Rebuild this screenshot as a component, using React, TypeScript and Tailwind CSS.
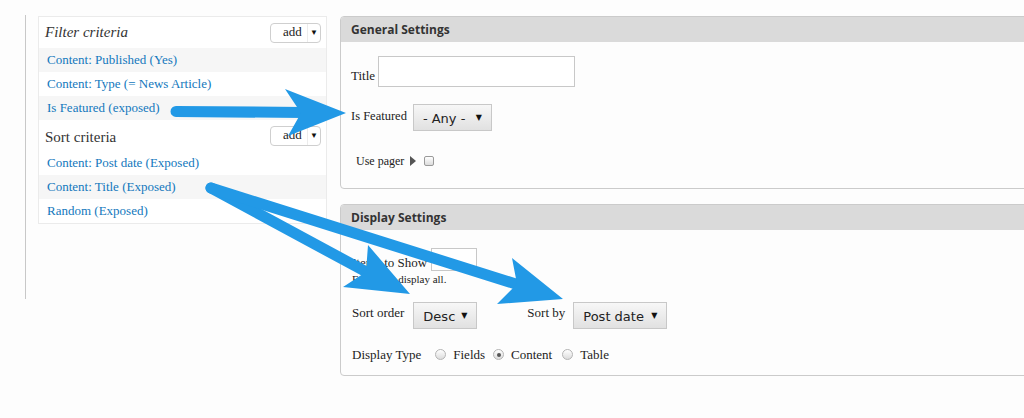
import React from 'react';

type Row = { label: string; shaded: boolean };

const filterRows: Row[] = [
  { label: 'Content: Published (Yes)', shaded: true },
  { label: 'Content: Type (= News Article)', shaded: false },
  { label: 'Is Featured (exposed)', shaded: true },
];

const sortRows: Row[] = [
  { label: 'Content: Post date (Exposed)', shaded: false },
  { label: 'Content: Title (Exposed)', shaded: true },
  { label: 'Random (Exposed)', shaded: false },
];

function AddButton() {
  return (
    <div className="flex h-[20px] w-[51px] items-center rounded-[4px] border border-[#cfcfcf] bg-white text-[13px] leading-none text-[#222]">
      <span className="flex-1 pl-[12px] pb-[2px]">add</span>
      <span className="flex h-full w-[13px] items-center justify-center border-l border-[#ececec] text-[8px] text-[#111]">▼</span>
    </div>
  );
}

function CriteriaRow({ label, shaded }: Row) {
  return (
    <div
      className={`flex h-[24px] items-center pl-[8px] text-[13px] text-[#1378bd] ${
        shaded ? 'bg-[#f6f6f6]' : 'bg-white'
      }`}
    >
      {label}
    </div>
  );
}

function Select({ value, width }: { value: string; width: string }) {
  return (
    <div
      className={`flex h-[27px] items-center justify-between border border-[#c8c8c8] bg-linear-to-b from-[#f7f7f7] to-[#e1e1e1] pl-[9px] pr-[9px] font-['DejaVu_Sans',sans-serif] text-[13px] text-[#222] ${width}`}
    >
      <span className="pt-[2px]">{value}</span>
      <span className="text-[8px] text-[#111]">▼</span>
    </div>
  );
}

function Radio({ checked }: { checked?: boolean }) {
  return (
    <span className="flex h-[11px] w-[11px] items-center justify-center rounded-full border border-[#b4b4b4] bg-linear-to-b from-white to-[#dcdcdc]">
      {checked && <span className="h-[4px] w-[4px] rounded-full bg-[#555]" />}
    </span>
  );
}

function PanelHeader({ title }: { title: string }) {
  return (
    <div className="flex h-[25px] items-center rounded-t-[3px] bg-[#dadada] pl-[10px] font-['Open_Sans',sans-serif] text-[12px] font-bold text-[#333]">
      {title}
    </div>
  );
}

function Arrows() {
  return (
    <svg
      className="pointer-events-none absolute inset-0 h-full w-full"
      viewBox="0 0 1024 418"
      fill="#2299e6"
    >
      {/* Is Featured -> exposed filter */}
      <line x1="176" y1="111.5" x2="304" y2="112.5" stroke="#2299e6" strokeWidth="11" strokeLinecap="round" />
      <polygon points="285,89 346,113 288,136 301,113" />
      {/* Title -> sort order */}
      <line x1="211" y1="188" x2="372" y2="275" stroke="#2299e6" strokeWidth="11" strokeLinecap="round" />
      <polygon points="368,245 410,294 343,287 366,272" />
      {/* Title -> sort by */}
      <line x1="211" y1="188" x2="522" y2="286" stroke="#2299e6" strokeWidth="11" strokeLinecap="round" />
      <polygon points="512,258 563,299 497,304 517,284" />
    </svg>
  );
}

export default function App() {
  return (
    <div className="relative h-[418px] w-[1024px] overflow-hidden bg-[#fdfdfd] font-['Liberation_Serif',serif] text-[#222]">
      <div className="flex pt-[15px]">
        {/* Left column: views criteria list */}
        <div className="ml-[25px] h-[284px] shrink-0 border-l border-[#c8c8c8] pl-[12px] pt-[1px]">
          <div className="w-[289px] border border-[#ebebeb] bg-white">
            <div className="flex h-[31px] items-center justify-between pl-[6px] pr-[5px]">
              <span className="text-[15px] italic text-[#333]">Filter criteria</span>
              <AddButton />
            </div>
            {filterRows.map((r) => (
              <CriteriaRow key={r.label} {...r} />
            ))}
            <div className="flex h-[31px] items-center justify-between pl-[6px] pr-[5px]">
              <span className="pt-[3px] text-[15px] text-[#333]">Sort criteria</span>
              <AddButton />
            </div>
            {sortRows.map((r) => (
              <CriteriaRow key={r.label} {...r} />
            ))}
          </div>
        </div>

        {/* Right column: settings panels */}
        <div className="ml-[13px] flex w-[720px] shrink-0 flex-col gap-[15px] pt-[1px] text-[13px]">
          <div className="h-[173px] rounded-[4px] border border-[#cbcbcb] bg-[#fdfdfd]">
            <PanelHeader title="General Settings" />
            <div className="pl-[10px]">
              <div className="mt-[14px] flex items-center gap-[3px]">
                <span className="pt-[8px]">Title</span>
                <div className="h-[31px] w-[197px] border border-[#c8c8c8] bg-white" />
              </div>
              <div className="mt-[17px] flex items-center gap-[6px]">
                <span className="mb-[2px] text-[12.5px]">Is Featured</span>
                <Select value="- Any -" width="w-[79px]" />
              </div>
              <div className="mt-[23px] flex h-[14px] items-center pl-[5px]">
                <span className="text-[12px]">Use pager</span>
                <svg className="ml-[6px]" width="6" height="10" viewBox="0 0 6 10">
                  <polygon points="0,0 6,5 0,10" fill="#555" />
                </svg>
                <span className="ml-[8px] h-[10px] w-[10px] rounded-[2px] border border-[#9a9a9a] bg-linear-to-b from-white to-[#dcdcdc]" />
              </div>
            </div>
          </div>

          <div className="h-[172px] rounded-[4px] border border-[#cbcbcb] bg-[#fdfdfd]">
            <PanelHeader title="Display Settings" />
            <div className="pl-[11px]">
              <div className="mt-[16px] flex items-center gap-[4px]">
                <span className="pt-[7px]">Items to Show</span>
                <div className="h-[23px] w-[46px] border border-[#c8c8c8] bg-white" />
              </div>
              <div className="-mt-[2px] text-[11px]">Enter 0 to display all.</div>
              <div className="mt-[15px] flex items-center">
                <span className="mb-[5px]">Sort order</span>
                <span className="ml-[9px]">
                  <Select value="Desc" width="w-[64px]" />
                </span>
                <span className="mb-[5px] ml-[50px]">Sort by</span>
                <span className="ml-[8px]">
                  <Select value="Post date" width="w-[94px]" />
                </span>
              </div>
              <div className="mt-[16px] flex items-center">
                <span>Display Type</span>
                <span className="ml-[14px]">
                  <Radio />
                </span>
                <span className="ml-[7px]">Fields</span>
                <span className="ml-[8px]">
                  <Radio checked />
                </span>
                <span className="ml-[7px]">Content</span>
                <span className="ml-[10px]">
                  <Radio />
                </span>
                <span className="ml-[7px]">Table</span>
              </div>
            </div>
          </div>
        </div>
      </div>
      <Arrows />
    </div>
  );
}
